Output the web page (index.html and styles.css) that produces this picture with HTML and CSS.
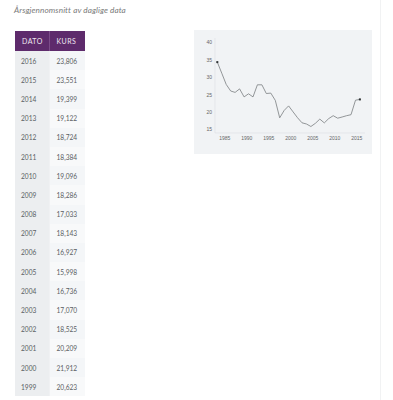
FILE: index.html
```html
<!DOCTYPE html>
<html lang="no">
<head>
<meta charset="utf-8">
<link rel="stylesheet" href="styles.css">
</head>
<body>
<div class="page">
  <p class="caption">Årsgjennomsnitt av daglige data</p>
  <div class="content">
    <table class="data">
      <thead>
        <tr><th class="c1">DATO</th><th class="c2">KURS</th></tr>
      </thead>
      <tbody>
        <tr><td>2016</td><td>23,806</td></tr>
        <tr><td>2015</td><td>23,551</td></tr>
        <tr><td>2014</td><td>19,399</td></tr>
        <tr><td>2013</td><td>19,122</td></tr>
        <tr><td>2012</td><td>18,724</td></tr>
        <tr><td>2011</td><td>18,384</td></tr>
        <tr><td>2010</td><td>19,096</td></tr>
        <tr><td>2009</td><td>18,286</td></tr>
        <tr><td>2008</td><td>17,033</td></tr>
        <tr><td>2007</td><td>18,143</td></tr>
        <tr><td>2006</td><td>16,927</td></tr>
        <tr><td>2005</td><td>15,998</td></tr>
        <tr><td>2004</td><td>16,736</td></tr>
        <tr><td>2003</td><td>17,070</td></tr>
        <tr><td>2002</td><td>18,525</td></tr>
        <tr><td>2001</td><td>20,209</td></tr>
        <tr><td>2000</td><td>21,912</td></tr>
        <tr><td>1999</td><td>20,623</td></tr>
      </tbody>
    </table>
    <div class="chart">
      <svg width="178" height="124" viewBox="0 0 178 124">
        <line class="axis" x1="21" y1="8" x2="21" y2="103"/>
        <line class="axis" x1="21" y1="103" x2="171" y2="103"/>
        <g class="ylab">
          <text x="18" y="13">40</text>
          <text x="18" y="30.4">35</text>
          <text x="18" y="47.8">30</text>
          <text x="18" y="65.2">25</text>
          <text x="18" y="82.6">20</text>
          <text x="18" y="100">15</text>
        </g>
        <g class="xlab">
          <text x="30.7" y="109">1985</text>
          <text x="52.7" y="109">1990</text>
          <text x="74.7" y="109">1995</text>
          <text x="96.7" y="109">2000</text>
          <text x="118.7" y="109">2005</text>
          <text x="140.7" y="109">2010</text>
          <text x="162.7" y="109">2015</text>
        </g>
        <polyline class="series" points="23.3,32.1 27.8,43.3 32.2,54.4 36.7,61 41.1,62.4 45.6,58.9 50.1,66.9 54.5,63.8 59,66.9 63.4,54.8 67.9,54.8 72.3,63.5 76.8,63.1 81.3,70.4 85.7,87.8 90.2,80.4 94.6,75.9 99.1,81.9 103.5,87.7 108,92.8 112.5,94 116.9,96.5 121.4,93.3 125.8,89.1 130.3,92.9 134.7,88.6 139.2,85.7 143.7,88.2 148.1,87 152.6,85.7 157,84.7 161.5,70.2 165.9,69.4"/>
        <rect class="dot" x="22.3" y="31.1" width="2" height="2"/>
        <rect class="dot" x="164.9" y="68.4" width="2" height="2"/>
      </svg>
    </div>
  </div>
</div>
</body>
</html>
```
FILE: styles.css
```css
html, body {
  margin: 0;
  padding: 0;
  background: #ffffff;
}

.page {
  width: 381px;
  min-height: 400px;
  box-sizing: border-box;
  border-right: 1px solid #f1f2f3;
  padding-left: 15px;
}

.caption {
  margin: 0 0 0 -1px;
  height: 31px;
  box-sizing: border-box;
  padding-top: 5px;
  font-family: Lato, "Open Sans", sans-serif;
  font-style: italic;
  font-size: 8.2px;
  line-height: 10px;
  color: #7a7a7a;
  letter-spacing: 0.1px;
}

.content {
  display: flex;
  align-items: flex-start;
  gap: 109px;
}

.data {
  border-collapse: collapse;
  font-family: Lato, "Open Sans", sans-serif;
  font-size: 6.6px;
  color: #5a5e63;
}

.data th {
  height: 20px;
  padding: 0 0 0 7px;
  text-align: left;
  background: #5e2b6c;
  color: #efe8f1;
  font-weight: 400;
  font-size: 7px;
  letter-spacing: 0.45px;
  box-sizing: border-box;
}

.data th.c1 {
  width: 34px;
}

.data th.c2 {
  width: 36px;
  border-left: 1px solid #7c4c89;
}

.data td {
  height: 19.2px;
  padding: 0 0 0 6px;
  box-sizing: border-box;
}

.data td:first-child {
  background: #eceef0;
}

.data td:last-child {
  background: #f4f6f8;
  padding-left: 7px;
  border-left: 1px solid #f0f1f3;
}

.data tr:nth-child(even) td:last-child {
  background: #f8f9fa;
}

.chart {
  width: 178px;
  height: 124px;
  margin-top: -1px;
  background: #f1f3f5;
}

.chart svg {
  display: block;
}

.axis {
  stroke: #dcdfe3;
  stroke-width: 0.6;
}

.ylab text {
  font-family: "Liberation Sans", Arial, sans-serif;
  font-size: 5px;
  fill: #666;
  text-anchor: end;
  dominant-baseline: middle;
}

.xlab text {
  font-family: "Liberation Sans", Arial, sans-serif;
  font-size: 5px;
  fill: #666;
  text-anchor: middle;
  dominant-baseline: middle;
}

.series {
  fill: none;
  stroke: #7a7d80;
  stroke-width: 0.8;
  stroke-linejoin: round;
}

.dot {
  fill: #2f3234;
}
```
